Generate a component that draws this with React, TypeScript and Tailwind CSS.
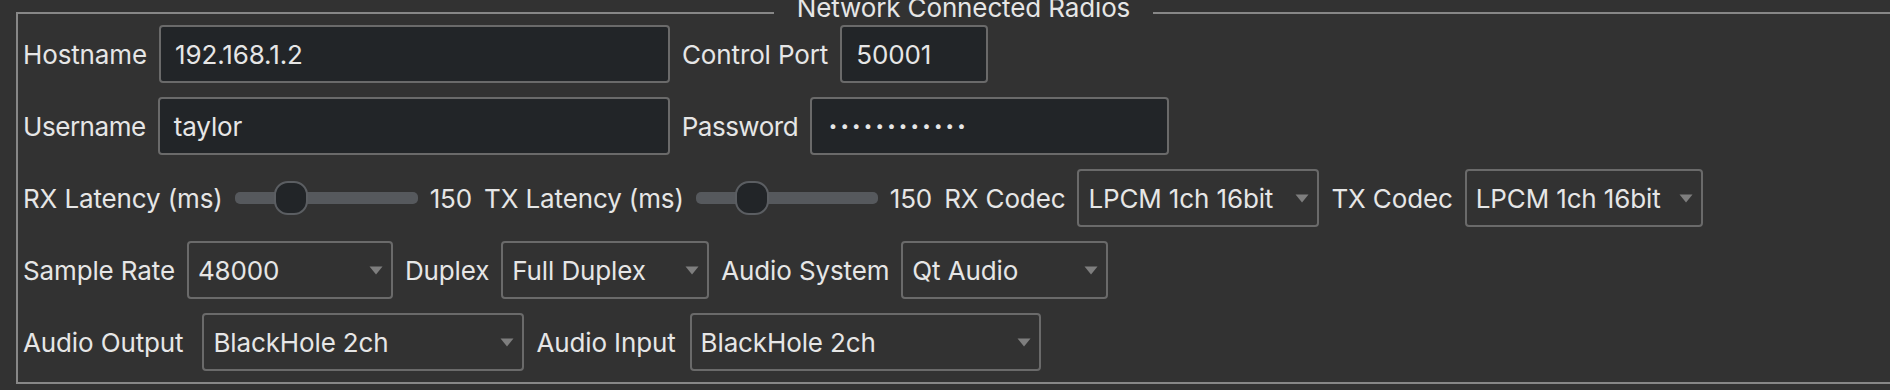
import React from "react";

const font = { fontFamily: "Inter, 'Noto Sans', sans-serif" };

function Label({ children, className = "" }: { children: React.ReactNode; className?: string }) {
  return <span className={`whitespace-nowrap text-[26px] text-[#e6e6e6] ${className}`}>{children}</span>;
}

function LineEdit({ value, className = "" }: { value: string; className?: string }) {
  return (
    <div
      className={`flex h-[58px] items-center rounded-[4px] border-2 border-[#6a6a6a] bg-[#222528] pl-[14px] text-[26px] text-[#e6e6e6] ${className}`}
    >
      {value}
    </div>
  );
}

function PasswordEdit({ length, className = "" }: { length: number; className?: string }) {
  return (
    <div
      className={`flex h-[58px] items-center rounded-[4px] border-2 border-[#6a6a6a] bg-[#222528] pl-[15px] text-[15px] text-[#e6e6e6] ${className}`}
    >
      {Array.from({ length }).map((_, i) => (
        <span key={i} className="w-[11.7px] text-center">
          •
        </span>
      ))}
    </div>
  );
}

function Combo({ value, className = "" }: { value: string; className?: string }) {
  return (
    <div
      className={`flex h-[58px] items-center justify-between rounded-[4px] border-2 border-[#6a6a6a] pl-[9px] pr-[8px] text-[26px] text-[#e6e6e6] ${className}`}
    >
      <span className="whitespace-nowrap">{value}</span>
      <svg width="14" height="9" viewBox="0 0 14 9" className="shrink-0">
        <path d="M0.5 0.5 H13.5 L7 8.5 Z" fill="#7e7e7e" />
      </svg>
    </div>
  );
}

function Slider({ className = "" }: { className?: string }) {
  return (
    <div className={`relative flex h-[34px] items-center ${className}`}>
      <div className="h-[12px] w-full rounded-[5px] bg-[#56595d]" />
      <div className="absolute left-[39px] top-0 h-[34px] w-[34px] rounded-[14px] border-2 border-[#5b5e62] bg-[#222528]" />
    </div>
  );
}

export default function App() {
  return (
    <div className="h-[390px] w-[1890px] overflow-hidden bg-[#323232] tracking-[-0.13px]" style={font}>
      <fieldset className="ml-[16px] mt-[1px] w-[1890px] border-2 border-[#878787] pb-[11px] pl-[5px]">
        <legend className="mx-auto -translate-y-[5px] px-[23px] text-[26px] leading-[24px] text-[#e6e6e6]">
          Network Connected Radios
        </legend>
        <div className="flex flex-col gap-[14px]">
          <div className="flex items-center gap-[12px]">
            <Label>Hostname</Label>
            <LineEdit value="192.168.1.2" className="w-[511px]" />
            <Label>Control Port</Label>
            <LineEdit value="50001" className="w-[148px]" />
          </div>
          <div className="flex items-center gap-[12px]">
            <Label className="tracking-[-0.45px]">Username</Label>
            <LineEdit value="taylor" className="w-[512px]" />
            <Label className="tracking-[-0.5px]">Password</Label>
            <PasswordEdit length={12} className="w-[359px]" />
          </div>
          <div className="flex h-[58px] items-center gap-[12px]">
            <Label>RX Latency (ms)</Label>
            <Slider className="w-[183px]" />
            <Label>150</Label>
            <Label>TX Latency (ms)</Label>
            <Slider className="w-[182px]" />
            <Label>150</Label>
            <Label>RX Codec</Label>
            <Combo value="LPCM 1ch 16bit" className="w-[242px]" />
            <Label>TX Codec</Label>
            <Combo value="LPCM 1ch 16bit" className="w-[238px]" />
          </div>
          <div className="flex items-center gap-[12px]">
            <Label>Sample Rate</Label>
            <Combo value="48000" className="w-[206px]" />
            <Label>Duplex</Label>
            <Combo value="Full Duplex" className="w-[208px]" />
            <Label>Audio System</Label>
            <Combo value="Qt Audio" className="w-[207px]" />
          </div>
          <div className="flex items-center gap-[12px]">
            <Label>Audio Output</Label>
            <Combo value="BlackHole 2ch" className="ml-[7px] w-[322px]" />
            <Label>Audio Input</Label>
            <Combo value="BlackHole 2ch" className="ml-[2px] w-[351px]" />
          </div>
        </div>
      </fieldset>
    </div>
  );
}
